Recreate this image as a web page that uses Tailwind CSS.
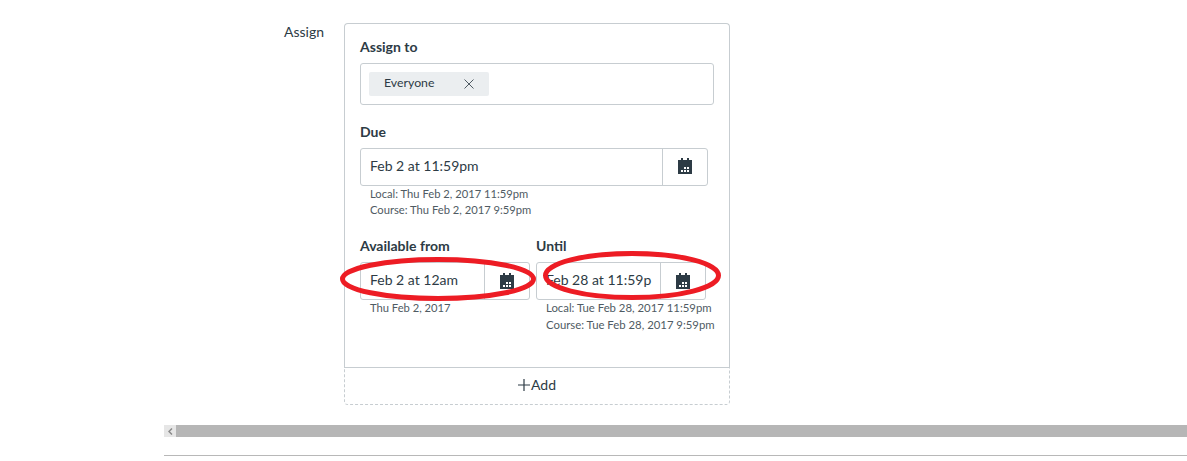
<!DOCTYPE html>
<html lang="en">
<head>
  <meta charset="UTF-8" />
  <title>Assign</title>
  <script src="https://cdn.jsdelivr.net/npm/@tailwindcss/browser@4"></script>
</head>
<body class="bg-white text-[#2d3b45] font-['Lato','Liberation_Sans',sans-serif] overflow-hidden">
  <div class="relative w-[1187px] h-[461px] overflow-hidden">

    <div class="flex pt-[23px]">
      <div class="w-[324px] text-right text-sm leading-[18px] text-[#2d3b45]">Assign</div>

      <div class="ml-[20px] w-[386px]">
        <!-- assign card -->
        <div class="h-[344px] border border-[#c7cdd1] border-b-0 rounded-t-[4px] px-[15px] pt-[14px]">
          <div class="text-sm font-bold leading-[18px]">Assign to</div>
          <div class="mt-[7px] h-[42px] w-[354px] border border-[#c7cdd1] rounded-[3px] pt-[8px] pl-[8px]">
            <div class="flex items-center w-[120px] h-[24px] pb-[1px] bg-[#ebeef0] rounded-[2px] pl-[15px] text-[12.3px]">
              <span>Everyone</span>
              <svg class="ml-[30px]" width="10" height="10" viewBox="0 0 10 10" fill="none" stroke="#4f5b63" stroke-width="1"><path d="M0.5 0.5 L9.5 9.5 M9.5 0.5 L0.5 9.5" /></svg>
            </div>
          </div>

          <div class="mt-[18px] text-sm font-bold leading-[18px]">Due</div>
          <div class="mt-[7px] flex w-[348px] h-[38px] border border-[#c7cdd1] rounded-[3px]">
            <div class="flex-1 pl-[9px] text-sm leading-[33px]">Feb 2 at 11:59pm</div>
            <div class="w-[45px] border-l border-[#c7cdd1] flex items-center justify-center">
              <svg class="mb-[2px]" width="14" height="16" viewBox="0 0 14 16" fill="#2d3b45"><path d="M3 0h2v2h4V0h2v2h3v14H0V2h3z" /><path fill="#fff" d="M6 9h2v2H6zM9 9h2v2H9zM3 12h2v2H3zM6 12h2v2H6zM9 12h2v2H9z" /></svg>
            </div>
          </div>
          <div class="pl-[10px] text-[11.2px] leading-[16px] text-[#4f5b63]">
            <div>Local: Thu Feb 2, 2017 11:59pm</div>
            <div>Course: Thu Feb 2, 2017 9:59pm</div>
          </div>

          <div class="mt-[19px] flex">
            <div class="w-[176px]">
              <div class="text-sm font-bold leading-[18px]">Available from</div>
              <div class="mt-[7px] flex w-[170px] h-[38px] border border-[#c7cdd1] rounded-[3px]">
                <div class="flex-1 pl-[9px] text-sm leading-[33px]">Feb 2 at 12am</div>
                <div class="w-[45px] border-l border-[#c7cdd1] flex items-center justify-center">
                  <svg width="14" height="16" viewBox="0 0 14 16" fill="#2d3b45"><path d="M3 0h2v2h4V0h2v2h3v14H0V2h3z" /><path fill="#fff" d="M6 9h2v2H6zM9 9h2v2H9zM3 12h2v2H3zM6 12h2v2H6zM9 12h2v2H9z" /></svg>
                </div>
              </div>
              <div class="pl-[10px] text-[11.2px] leading-[16px] text-[#4f5b63]">Thu Feb 2, 2017</div>
            </div>
            <div class="w-[178px]">
              <div class="text-sm font-bold leading-[18px]">Until</div>
              <div class="mt-[7px] flex w-[170px] h-[38px] border border-[#c7cdd1] rounded-[3px]">
                <div class="w-[123px] pl-[9px] text-sm leading-[33px] whitespace-nowrap">Feb 28 at 11:59p</div>
                <div class="flex-1 border-l border-[#c7cdd1] flex items-center justify-center">
                  <svg width="14" height="16" viewBox="0 0 14 16" fill="#2d3b45"><path d="M3 0h2v2h4V0h2v2h3v14H0V2h3z" /><path fill="#fff" d="M6 9h2v2H6zM9 9h2v2H9zM3 12h2v2H3zM6 12h2v2H6zM9 12h2v2H9z" /></svg>
                </div>
              </div>
              <div class="-mt-[1px] pl-[10px] text-[11.35px] leading-[17px] text-[#4f5b63] whitespace-nowrap">
                <div>Local: Tue Feb 28, 2017 11:59pm</div>
                <div>Course: Tue Feb 28, 2017 9:59pm</div>
              </div>
            </div>
          </div>
        </div>

        <!-- add row -->
        <div class="h-[38px] border border-dashed border-[#c7cdd1] border-t-0 rounded-b-[4px] text-sm">
          <div class="w-full h-full pb-[2px] border-t border-solid border-[#c7cdd1] flex items-center justify-center">
            <svg width="12" height="12" viewBox="0 0 12 12" stroke="#2d3b45" stroke-width="1.2"><path d="M6 0v12M0 6h12" /></svg>
            <span class="ml-[1px]">Add</span>
          </div>
        </div>
      </div>
    </div>

    <!-- horizontal scrollbar -->
    <div class="ml-[164px] mt-[20px] flex h-[12px] bg-[#b6b6b6]">
      <div class="w-[12px] bg-[#e6e6e6] flex items-center justify-center">
        <svg width="5" height="7" viewBox="0 0 5 7" fill="none" stroke="#8a8a8a" stroke-width="1.5"><path d="M4 0.5 L1 3.5 L4 6.5" /></svg>
      </div>
    </div>
    <div class="ml-[164px] mt-[18px] h-px bg-[#b8b8b8]"></div>

    <!-- red hand-drawn circles over the date fields -->
    <svg class="absolute left-0 top-0 pointer-events-none" width="1187" height="461" fill="none" stroke="#ed1c24" stroke-width="5">
      <ellipse cx="438" cy="279" rx="95.5" ry="19.5" />
      <ellipse cx="632" cy="275.5" rx="86.5" ry="22" />
    </svg>
  </div>
</body>
</html>
